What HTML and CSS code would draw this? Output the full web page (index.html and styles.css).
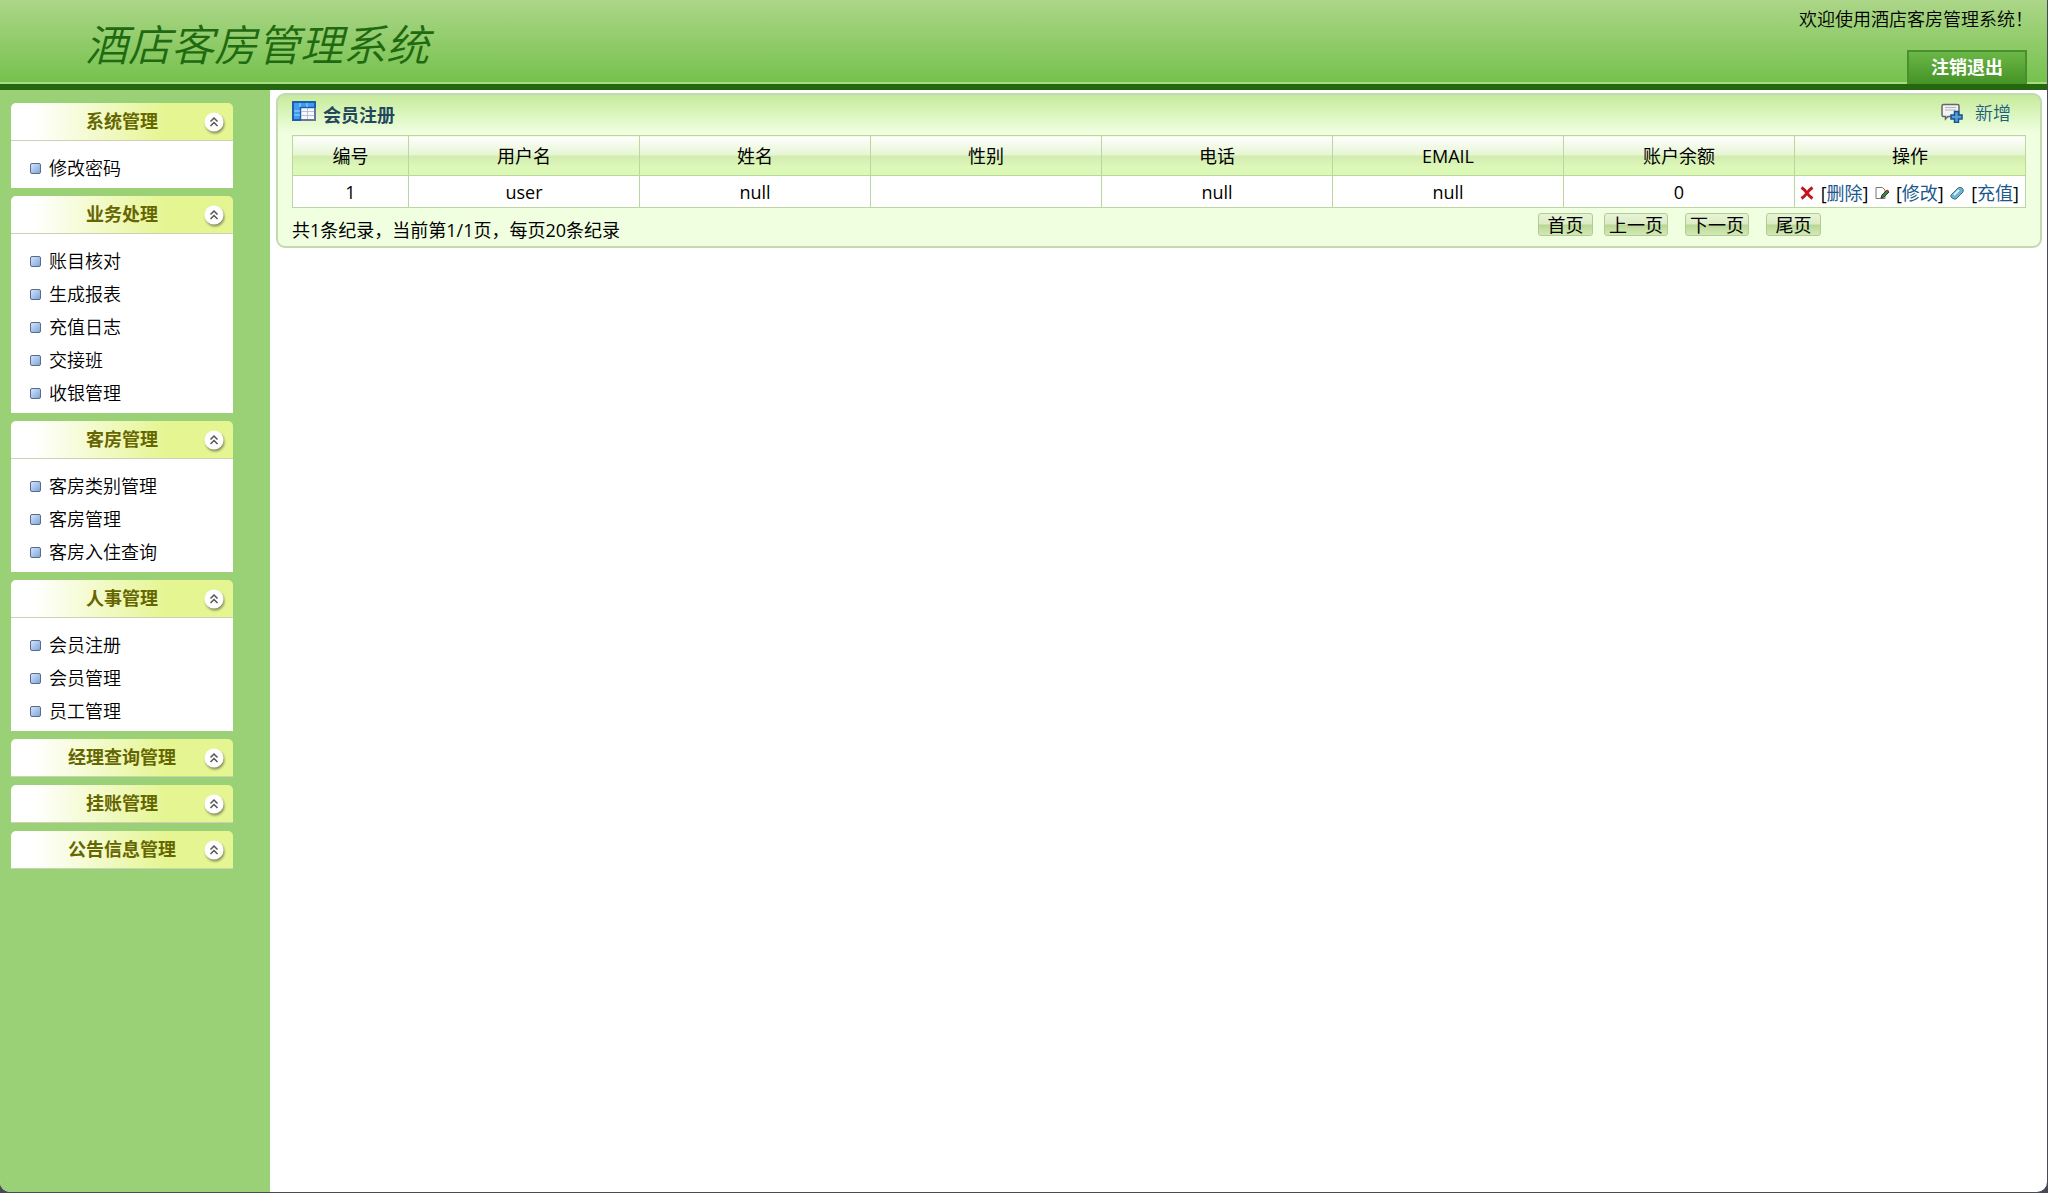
FILE: index.html
```html
<!DOCTYPE html>
<html lang="zh-CN">
<head>
<meta charset="utf-8">
<title>酒店客房管理系统</title>
<link rel="stylesheet" href="styles.css">
</head>
<body>
<svg class="defs" aria-hidden="true">
  <symbol id="fold" viewBox="0 0 20 20">
    <circle cx="10" cy="10" r="9.5" fill="#fff"/>
    <path d="M6.5 9.500 10 6l3.500 3.500M6.500 14 10 10.500l3.500 3.500" fill="none" stroke="#555" stroke-width="1.500"/>
  </symbol>
</svg>
<div class="window">
  <header class="top">
    <h1 class="brand">酒店客房管理系统</h1>
    <div class="account">
      <span class="welcome">欢迎使用酒店客房管理系统！</span>
      <button class="logout" type="button">注销退出</button>
    </div>
  </header>
  <div class="frame">
    <nav class="side">
      <section class="group">
        <h2 class="group-head">系统管理<svg class="fold"><use href="#fold"/></svg></h2>
        <ul class="menu"><li><a href="#">修改密码</a></li></ul>
      </section>
      <section class="group">
        <h2 class="group-head">业务处理<svg class="fold"><use href="#fold"/></svg></h2>
        <ul class="menu">
          <li><a href="#">账目核对</a></li>
          <li><a href="#">生成报表</a></li>
          <li><a href="#">充值日志</a></li>
          <li><a href="#">交接班</a></li>
          <li><a href="#">收银管理</a></li>
        </ul>
      </section>
      <section class="group">
        <h2 class="group-head">客房管理<svg class="fold"><use href="#fold"/></svg></h2>
        <ul class="menu">
          <li><a href="#">客房类别管理</a></li>
          <li><a href="#">客房管理</a></li>
          <li><a href="#">客房入住查询</a></li>
        </ul>
      </section>
      <section class="group">
        <h2 class="group-head">人事管理<svg class="fold"><use href="#fold"/></svg></h2>
        <ul class="menu">
          <li><a href="#">会员注册</a></li>
          <li><a href="#">会员管理</a></li>
          <li><a href="#">员工管理</a></li>
        </ul>
      </section>
      <section class="group"><h2 class="group-head">经理查询管理<svg class="fold"><use href="#fold"/></svg></h2></section>
      <section class="group"><h2 class="group-head">挂账管理<svg class="fold"><use href="#fold"/></svg></h2></section>
      <section class="group"><h2 class="group-head">公告信息管理<svg class="fold"><use href="#fold"/></svg></h2></section>
    </nav>
    <main class="content">
      <section class="panel">
        <div class="panel-head">
          <svg class="icon-table" viewBox="0 0 24 20">
            <rect x="1" y="1" width="22" height="18" fill="#f8f9fd" stroke="#1d5fae" stroke-width="2"/>
            <path d="M2 2h20v4H2zM2 6h6v12H2z" fill="#3f9df0"/>
            <path d="M8 6.500h14M8.500 6v12" stroke="#1d5fae" stroke-width="1.500" fill="none"/>
            <path d="M2 10h6M2 14h6M8 2v4M15 2v4" stroke="#a8d6ff" stroke-width="1" fill="none"/>
            <path d="M9 10.500h13M9 14.500h13M15.500 7v11" stroke="#b9bfd6" stroke-width="1" fill="none"/>
            <path d="M9 19h14V7" fill="none" stroke="#6a74a0" stroke-width="2"/>
          </svg>
          <h2 class="panel-title">会员注册</h2>
          <a class="add" href="#">
            <svg class="icon-add" viewBox="0 0 22 20">
              <path d="M2.500 1.500h14q1.500 0 1.500 1.500v9q0 1.500-1.500 1.500H7L4.500 16v-2.500h-2Q1 13.500 1 12V3q0-1.500 1.500-1.500z" fill="#f3f3f3" stroke="#66666a" stroke-width="1.500"/>
              <path d="M4 4.500h11M4 7h11" stroke="#b5b5bd" stroke-width="1"/>
              <path d="M13.500 8.500h4v3.500H21v4h-3.500v3.500h-4V16H10v-4h3.500z" fill="#4f9fdc" stroke="#17548c" stroke-width="1.500"/>
            </svg>
            新增
          </a>
        </div>
        <table class="grid">
          <thead>
            <tr><th class="col-id">编号</th><th>用户名</th><th>姓名</th><th>性别</th><th>电话</th><th>EMAIL</th><th>账户余额</th><th>操作</th></tr>
          </thead>
          <tbody>
            <tr>
              <td>1</td><td>user</td><td>null</td><td></td><td>null</td><td>null</td><td>0</td>
              <td>
                <div class="ops">
                  <svg class="op-icon" viewBox="0 0 14 14"><path d="M1.500 1.500q3 2 5.500 5.500 2 3 5.500 5.500M12.500 1.500Q9 4 7 7q-2 3-5.500 5.500" fill="none" stroke="#c4161c" stroke-width="3"/></svg>
                  <span>[<a href="#">删除</a>]</span>
                  <svg class="op-icon" viewBox="0 0 14 14"><path d="M1 1.500h6.500L10 4v8.500H1z" fill="#fff" stroke="#777" stroke-width="1"/><path d="M6 12l1-3 5-5 2 2-5 5z" fill="#3b8a3d" stroke="#333" stroke-width="1"/><path d="M11 5l1.500-1.500L14 5l-1.500 1.500z" fill="#c0392b"/></svg>
                  <span>[<a href="#">修改</a>]</span>
                  <svg class="op-icon" viewBox="0 0 14 14"><path d="M1 9l7-7q2-1.500 4 0t1 4l-7 7q-2 .5-4-1T1 9z" fill="#6db4ce" stroke="#3f6f80" stroke-width="1"/><path d="M4 9l5-5" stroke="#d8f3fb" stroke-width="2"/></svg>
                  <span>[<a href="#">充值</a>]</span>
                </div>
              </td>
            </tr>
          </tbody>
        </table>
        <div class="panel-foot">
          <p class="summary">共1条纪录，当前第1/1页，每页20条纪录</p>
          <div class="pager">
            <div class="pager-back">
              <button type="button">首页</button>
              <button type="button">上一页</button>
            </div>
            <button type="button">下一页</button>
            <button type="button">尾页</button>
          </div>
        </div>
      </section>
    </main>
  </div>
</div>
</body>
</html>
```
FILE: styles.css
```css
* { box-sizing: border-box; }

body {
  margin: 0;
  background: #454a56;
  color: #000;
  font: 350 18px/24px "Open Sans", "Noto Sans CJK SC", sans-serif;
}

h1, h2, p, ul { margin: 0; padding: 0; }
a { color: inherit; text-decoration: none; }
button { font: inherit; cursor: pointer; }
.defs { position: absolute; width: 0; height: 0; }

.window {
  display: flex;
  flex-direction: column;
  min-height: calc(100vh - 1px);
  margin: 0 1px 1px 0;
  overflow: hidden;
  background: #fff;
  border-radius: 0 0 10px 10px;
}

/* Banner */
.top {
  display: flex;
  justify-content: space-between;
  height: 90px;
  padding: 0 20px 0 85px;
  background: linear-gradient(#acd688, #76c24e 82px, #a9dc82 82px, #a9dc82 84px, #246710 84px);
}
.brand {
  color: #1f6a10;
  font: italic 350 43px/84px "Noto Sans CJK SC", sans-serif;
}
.account {
  display: flex;
  flex-direction: column;
  align-items: flex-end;
  justify-content: space-between;
  padding: 7px 0 6px;
}
.welcome { margin-right: -6px; }
.logout {
  width: 120px;
  height: 34px;
  padding: 0 0 2px;
  color: #fff;
  font-weight: 700;
  background: linear-gradient(#6bb848, #459225);
  border: 2px solid #4a8f2e;
  border-bottom: 0;
}

/* Menu */
.frame { display: flex; flex: 1; }
.side {
  display: flex;
  flex-direction: column;
  gap: 8px;
  flex: 0 0 270px;
  padding: 13px 37px 13px 11px;
  background: #9ad177;
}
.group-head {
  position: relative;
  height: 38px;
  color: #666600;
  font-size: 18px;
  line-height: 36px;
  text-align: center;
  background: linear-gradient(90deg, #fff 10%, #e5f591 70%);
  border-bottom: 1px solid #cfcfb4;
  border-radius: 5px 5px 0 0;
}
.fold {
  position: absolute;
  top: 9px;
  right: 9px;
  width: 20px;
  height: 20px;
  filter: drop-shadow(1px 2px 1px #8a8f60);
}
.menu {
  padding: 11px 0 3px 19px;
  list-style: none;
  line-height: 33px;
  background: #fff;
}
.menu li { display: flex; align-items: center; gap: 8px; }
.menu li::before {
  content: "";
  width: 9px;
  height: 9px;
  background: linear-gradient(135deg, #d3e3fa, #7fa5dc);
  border: 1px solid #5b6b85;
  border-radius: 2px;
}

/* Member list */
.content { flex: 1; padding: 3px 5px 3px 6px; }
.panel {
  padding: 0 14px 4px;
  background: linear-gradient(#c6eb9c, #f0ffe0 38px);
  border: 2px solid #c3d9b0;
  border-radius: 9px;
}
.panel-head {
  display: flex;
  align-items: center;
  height: 40px;
  padding-right: 15px;
}
.icon-table { width: 24px; height: 20px; margin-bottom: 8px; }
.panel-title {
  margin-left: 7px;
  color: #24465c;
  font-size: 18px;
  line-height: 24px;
}
.add {
  display: flex;
  align-items: center;
  gap: 12px;
  margin: 0 0 4px auto;
  color: #20607e;
}
.icon-add { width: 22px; height: 20px; }
.grid {
  width: 100%;
  table-layout: fixed;
  border-collapse: collapse;
  font-weight: 400;
  text-align: center;
}
.grid th, .grid td { padding: 0; border: 1px solid #bbd6a0; }
.grid th {
  height: 40px;
  font-weight: inherit;
  background: linear-gradient(#fff, #e6f5d2 48%, #d3ebb0 50%, #ddf8b9 80%, #dcfab4);
}
.grid .col-id { width: 116px; }
.grid td { height: 32px; background: #fff; }
.ops {
  display: flex;
  align-items: center;
  justify-content: space-between;
  padding: 3px 6px 0 5px;
}
.ops a { color: #1b588c; }
.op-icon { width: 14px; height: 14px; }
.panel-foot {
  display: flex;
  justify-content: space-between;
  align-items: flex-start;
  font-weight: 400;
}
.summary { padding-top: 10px; }
.pager {
  display: flex;
  gap: 17px;
  padding: 5px 205px 0 0;
}
.pager-back { display: flex; gap: 11px; }
.pager button {
  min-width: 55px;
  height: 23px;
  padding: 0 4px;
  line-height: 20px;
  background: linear-gradient(#e8f3d8, #dcecc4 48%, #b9d795 52%, #d3e9b6);
  border: 1px solid #b3cc93;
  border-radius: 3px;
}
```
